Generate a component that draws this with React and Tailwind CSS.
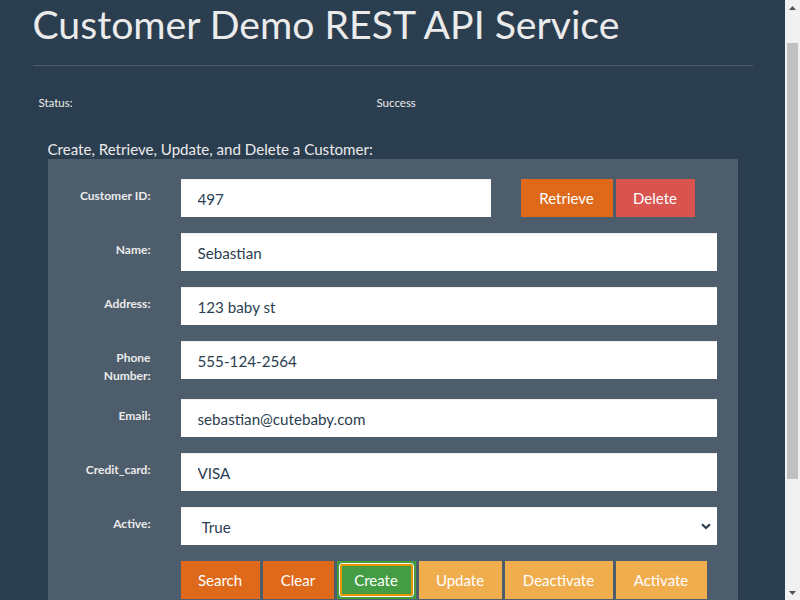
import React from "react";

const fields = [
  { label: "Name:", value: "Sebastian" },
  { label: "Address:", value: "123 baby st" },
  { label: ["Phone", "Number:"], value: "555-124-2564" },
  { label: "Email:", value: "sebastian@cutebaby.com" },
  { label: "Credit_card:", value: "VISA" },
];

function Label({ children }) {
  return (
    <div className="w-[103px] shrink-0 pt-[8px] text-right text-[12px] font-bold leading-[18px] text-[#ebebeb]">
      {children}
    </div>
  );
}

function TextBox({ value, className = "" }) {
  return (
    <input
      readOnly
      value={value}
      className={
        "h-[38px] bg-white pl-[17px] pt-[2px] text-[15.2px] text-[#2b3e50] outline-none shadow-[inset_0_1px_1px_rgba(0,0,0,0.075)] " +
        className
      }
    />
  );
}

function Btn({ children, tone, w }) {
  return (
    <button className={"h-[38px] text-center text-[15px] text-white " + tone + " " + w}>
      {children}
    </button>
  );
}

function Scrollbar() {
  return (
    <div className="flex w-[15px] shrink-0 flex-col bg-[#f1f1f1]">
      <div className="flex h-[15px] items-center justify-center">
        <svg width="7" height="4" viewBox="0 0 7 4">
          <path d="M0 4 L3.5 0 L7 4 Z" fill="#505050" />
        </svg>
      </div>
      <div className="h-[28px]" />
      <div className="mx-[2px] h-[436px] bg-[#c1c1c1]" />
      <div className="flex-1" />
      <div className="flex h-[15px] items-center justify-center">
        <svg width="7" height="4" viewBox="0 0 7 4">
          <path d="M0 0 L7 0 L3.5 4 Z" fill="#505050" />
        </svg>
      </div>
    </div>
  );
}

export default function App() {
  return (
    <div className="flex h-[600px] overflow-hidden bg-[#2b3e50] font-['Lato',sans-serif]">
      <div className="w-[785px] shrink-0">
        <div className="mx-auto w-[720px] pb-[80px]">
          <h1 className="pt-[2px] text-[39.2px] font-normal leading-[43px] text-[#ebebeb]">
            Customer Demo REST API Service
          </h1>
          <hr className="mt-[20px] border-t border-[#4a5b6b]" />

          <div className="mt-[29px] flex text-[11.5px] leading-[16px] text-[#ebebeb]">
            <div className="w-[344px] pl-[6px]">Status:</div>
            <div>Success</div>
          </div>

          <div className="ml-[15px] mt-[28px] w-[690px]">
            <div className="text-[15.1px] leading-[20px] text-[#ebebeb]">
              Create, Retrieve, Update, and Delete a Customer:
            </div>
            <div className="bg-[#4e5d6c] pb-[20px] pt-[20px]">
              <div className="mb-[16px] flex">
                <Label>Customer ID:</Label>
                <div className="ml-[30px] flex">
                  <TextBox value="497" className="w-[310px]" />
                  <div className="ml-[30px] flex gap-[3px]">
                    <Btn tone="bg-[#df691a]" w="w-[92px]">Retrieve</Btn>
                    <Btn tone="bg-[#d9534f]" w="w-[79px]">Delete</Btn>
                  </div>
                </div>
              </div>

              {fields.map((f, i) => (
                <div
                  key={i}
                  className={"flex " + (Array.isArray(f.label) ? "mb-[14px]" : "mb-[16px]")}
                >
                  <Label>
                    {Array.isArray(f.label)
                      ? f.label.map((l) => <div key={l}>{l}</div>)
                      : f.label}
                  </Label>
                  <TextBox value={f.value} className="ml-[30px] w-[536px]" />
                </div>
              ))}

              <div className="mb-[16px] flex">
                <Label>Active:</Label>
                <div className="relative ml-[30px] w-[536px]">
                  <select
                    defaultValue="True"
                    className="h-[38px] w-full appearance-none bg-white pl-[21px] pt-[2px] text-[15.2px] text-[#2b3e50] outline-none shadow-[inset_0_1px_1px_rgba(0,0,0,0.075)]"
                  >
                    <option>True</option>
                    <option>False</option>
                  </select>
                  <svg
                    className="pointer-events-none absolute right-[6px] top-[16px]"
                    width="10"
                    height="7"
                    viewBox="0 0 10 7"
                  >
                    <path d="M1 1.2 L5 5 L9 1.2" fill="none" stroke="#2b3e50" strokeWidth="2.2" />
                  </svg>
                </div>
              </div>

              <div className="ml-[133px] flex gap-[3px]">
                <Btn tone="bg-[#df691a]" w="w-[79px]">Search</Btn>
                <Btn tone="bg-[#df691a]" w="w-[71px]">Clear</Btn>
                <button className="relative h-[38px] w-[79px] bg-[#449d44] text-[15px] text-white">
                  <span className="absolute inset-[2px] rounded-[3px] border border-[#f4f4f4] shadow-[inset_0_0_0_2px_#e59700]" />
                  <span className="relative">Create</span>
                </button>
                <Btn tone="bg-[#f0ad4e]" w="w-[83px]">Update</Btn>
                <Btn tone="bg-[#f0ad4e]" w="w-[108px]">Deactivate</Btn>
                <Btn tone="bg-[#f0ad4e]" w="w-[91px]">Activate</Btn>
              </div>
            </div>
          </div>
        </div>
      </div>
      <Scrollbar />
    </div>
  );
}
